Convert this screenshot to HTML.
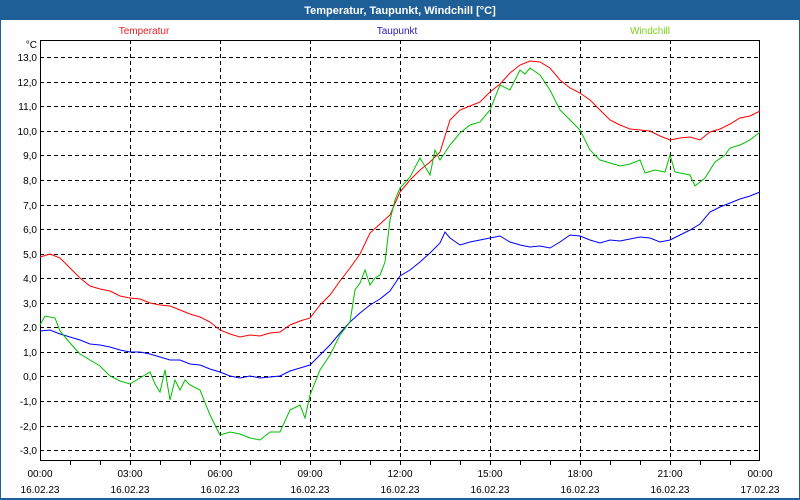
<!DOCTYPE html>
<html><head><meta charset="utf-8"><style>
html,body{margin:0;padding:0;width:800px;height:500px;overflow:hidden;background:#fff}
</style></head><body>
<svg width="800" height="500" xmlns="http://www.w3.org/2000/svg" font-family="Liberation Sans, sans-serif" font-size="10">
<rect x="0" y="0" width="800" height="500" fill="#fdfefd"/>
<rect x="0" y="0" width="800" height="20" fill="#1d5f96"/>
<rect x="0" y="0" width="1" height="500" fill="#1d5f96"/>
<rect x="799" y="0" width="1" height="500" fill="#1d5f96"/>
<rect x="0" y="498" width="800" height="2" fill="#1d5f96"/>
<text x="400" y="14" fill="#fff" font-weight="bold" font-size="11" text-anchor="middle">Temperatur, Taupunkt, Windchill [°C]</text>
<text x="144" y="34" fill="#e8202a" text-anchor="middle">Temperatur</text>
<text x="397" y="34" fill="#2a1ab0" text-anchor="middle">Taupunkt</text>
<text x="650" y="34" fill="#80d020" text-anchor="middle">Windchill</text>
<g stroke="#000" stroke-width="1" stroke-dasharray="4,3" fill="none">
<path d="M40 57.5H760M40 82.5H760M40 106.5H760M40 131.5H760M40 155.5H760M40 180.5H760M40 205.5H760M40 229.5H760M40 254.5H760M40 278.5H760M40 303.5H760M40 327.5H760M40 352.5H760M40 376.5H760M40 401.5H760M40 426.5H760M40 450.5H760"/>
<path d="M130.5 40V461M220.5 40V461M310.5 40V461M400.5 40V461M490.5 40V461M580.5 40V461M670.5 40V461"/>
</g>
<rect x="40.5" y="40.5" width="719" height="420" fill="none" stroke="#000"/>
<g stroke="#000"><path d="M70.5 461v4M100.5 461v4M130.5 461v4M160.5 461v4M190.5 461v4M220.5 461v4M250.5 461v4M280.5 461v4M310.5 461v4M340.5 461v4M370.5 461v4M400.5 461v4M430.5 461v4M460.5 461v4M490.5 461v4M520.5 461v4M550.5 461v4M580.5 461v4M610.5 461v4M640.5 461v4M670.5 461v4M700.5 461v4M730.5 461v4"/></g>
<g text-anchor="end" fill="#000">
<text x="37" y="48">°C</text>
<text x="37" y="61">13,0</text><text x="37" y="86">12,0</text><text x="37" y="110">11,0</text><text x="37" y="135">10,0</text>
<text x="37" y="159">9,0</text><text x="37" y="184">8,0</text><text x="37" y="209">7,0</text><text x="37" y="233">6,0</text>
<text x="37" y="258">5,0</text><text x="37" y="282">4,0</text><text x="37" y="307">3,0</text><text x="37" y="331">2,0</text>
<text x="37" y="356">1,0</text><text x="37" y="380">0,0</text><text x="37" y="405">-1,0</text><text x="37" y="430">-2,0</text><text x="37" y="454">-3,0</text>
</g>
<g text-anchor="middle" fill="#000">
<text x="40" y="477">00:00</text><text x="130" y="477">03:00</text><text x="220" y="477">06:00</text><text x="310" y="477">09:00</text><text x="400" y="477">12:00</text><text x="490" y="477">15:00</text><text x="580" y="477">18:00</text><text x="670" y="477">21:00</text><text x="760" y="477">00:00</text>
<text x="40" y="493">16.02.23</text><text x="130" y="493">16.02.23</text><text x="220" y="493">16.02.23</text><text x="310" y="493">16.02.23</text><text x="400" y="493">16.02.23</text><text x="490" y="493">16.02.23</text><text x="580" y="493">16.02.23</text><text x="670" y="493">16.02.23</text><text x="760" y="493">17.02.23</text>
</g>
<polyline fill="none" stroke="#ff0000" stroke-width="1" points="40,257 50,254 60,258 70,268 80,278 90,286 100,289 110,291 120,296 130,298 140,299 150,303 160,305 170,306 180,310 190,314 200,317 210,322 220,330 230,334 240,337 250,335 260,336 270,333 280,332 290,325 300,321 310,318 320,305 330,295 340,281 350,268 360,254 370,233 380,224 390,215 400,192 410,180 420,170 430,162 440,152 450,120 460,110 470,106 480,102 490,92 500,84 510,73 520,65 530,61 540,62 550,68 560,80 570,88 580,93 590,100 600,110 610,120 620,125 630,129 640,130 650,131 660,136 670,140 680,138 690,137 700,140 710,132 720,129 730,124 740,118 750,116 760,111"/>
<polyline fill="none" stroke="#0000ff" stroke-width="1" points="40,331 50,330 60,334 70,337 80,340 90,344 100,345 110,347 120,350 130,352 140,352 150,354 160,357 170,360 180,360 190,364 200,365 210,369 220,372 230,376 240,378 250,376 260,378 270,377 280,376 290,371 300,368 310,365 320,355 330,345 340,333 350,322 360,313 370,305 380,299 390,291 400,276 410,270 420,262 430,253 440,243 445,232 450,238 460,245 470,242 480,240 490,238 500,236 510,242 520,245 530,247 540,246 550,248 560,242 570,235 580,236 590,240 600,243 610,240 620,241 630,239 640,237 650,238 660,242 670,240 680,235 690,230 700,224 710,212 720,207 730,203 740,199 750,196 760,192"/>
<polyline fill="none" stroke="#00c000" stroke-width="1" points="40,325 45,316 55,318 60,331 70,343 80,354 90,360 100,366 110,376 120,381 130,384 140,378 150,372 155,384 160,392 165,370 170,400 175,380 180,390 185,380 190,385 200,390 210,415 220,435 230,432 240,434 250,438 260,440 270,432 280,432 290,410 300,405 305,418 310,395 320,370 330,355 340,335 350,322 355,290 360,283 365,270 370,285 375,278 380,275 385,262 390,220 395,200 400,188 410,177 420,158 430,175 435,150 440,160 450,145 460,133 470,125 480,122 490,110 500,85 510,90 520,70 525,74 530,68 540,75 550,90 560,110 570,120 580,130 590,150 600,160 610,163 620,166 630,164 640,160 645,173 655,170 665,172 670,155 675,172 690,175 695,186 705,178 715,162 725,155 730,148 740,145 750,140 760,132"/>
</svg>
</body></html>
